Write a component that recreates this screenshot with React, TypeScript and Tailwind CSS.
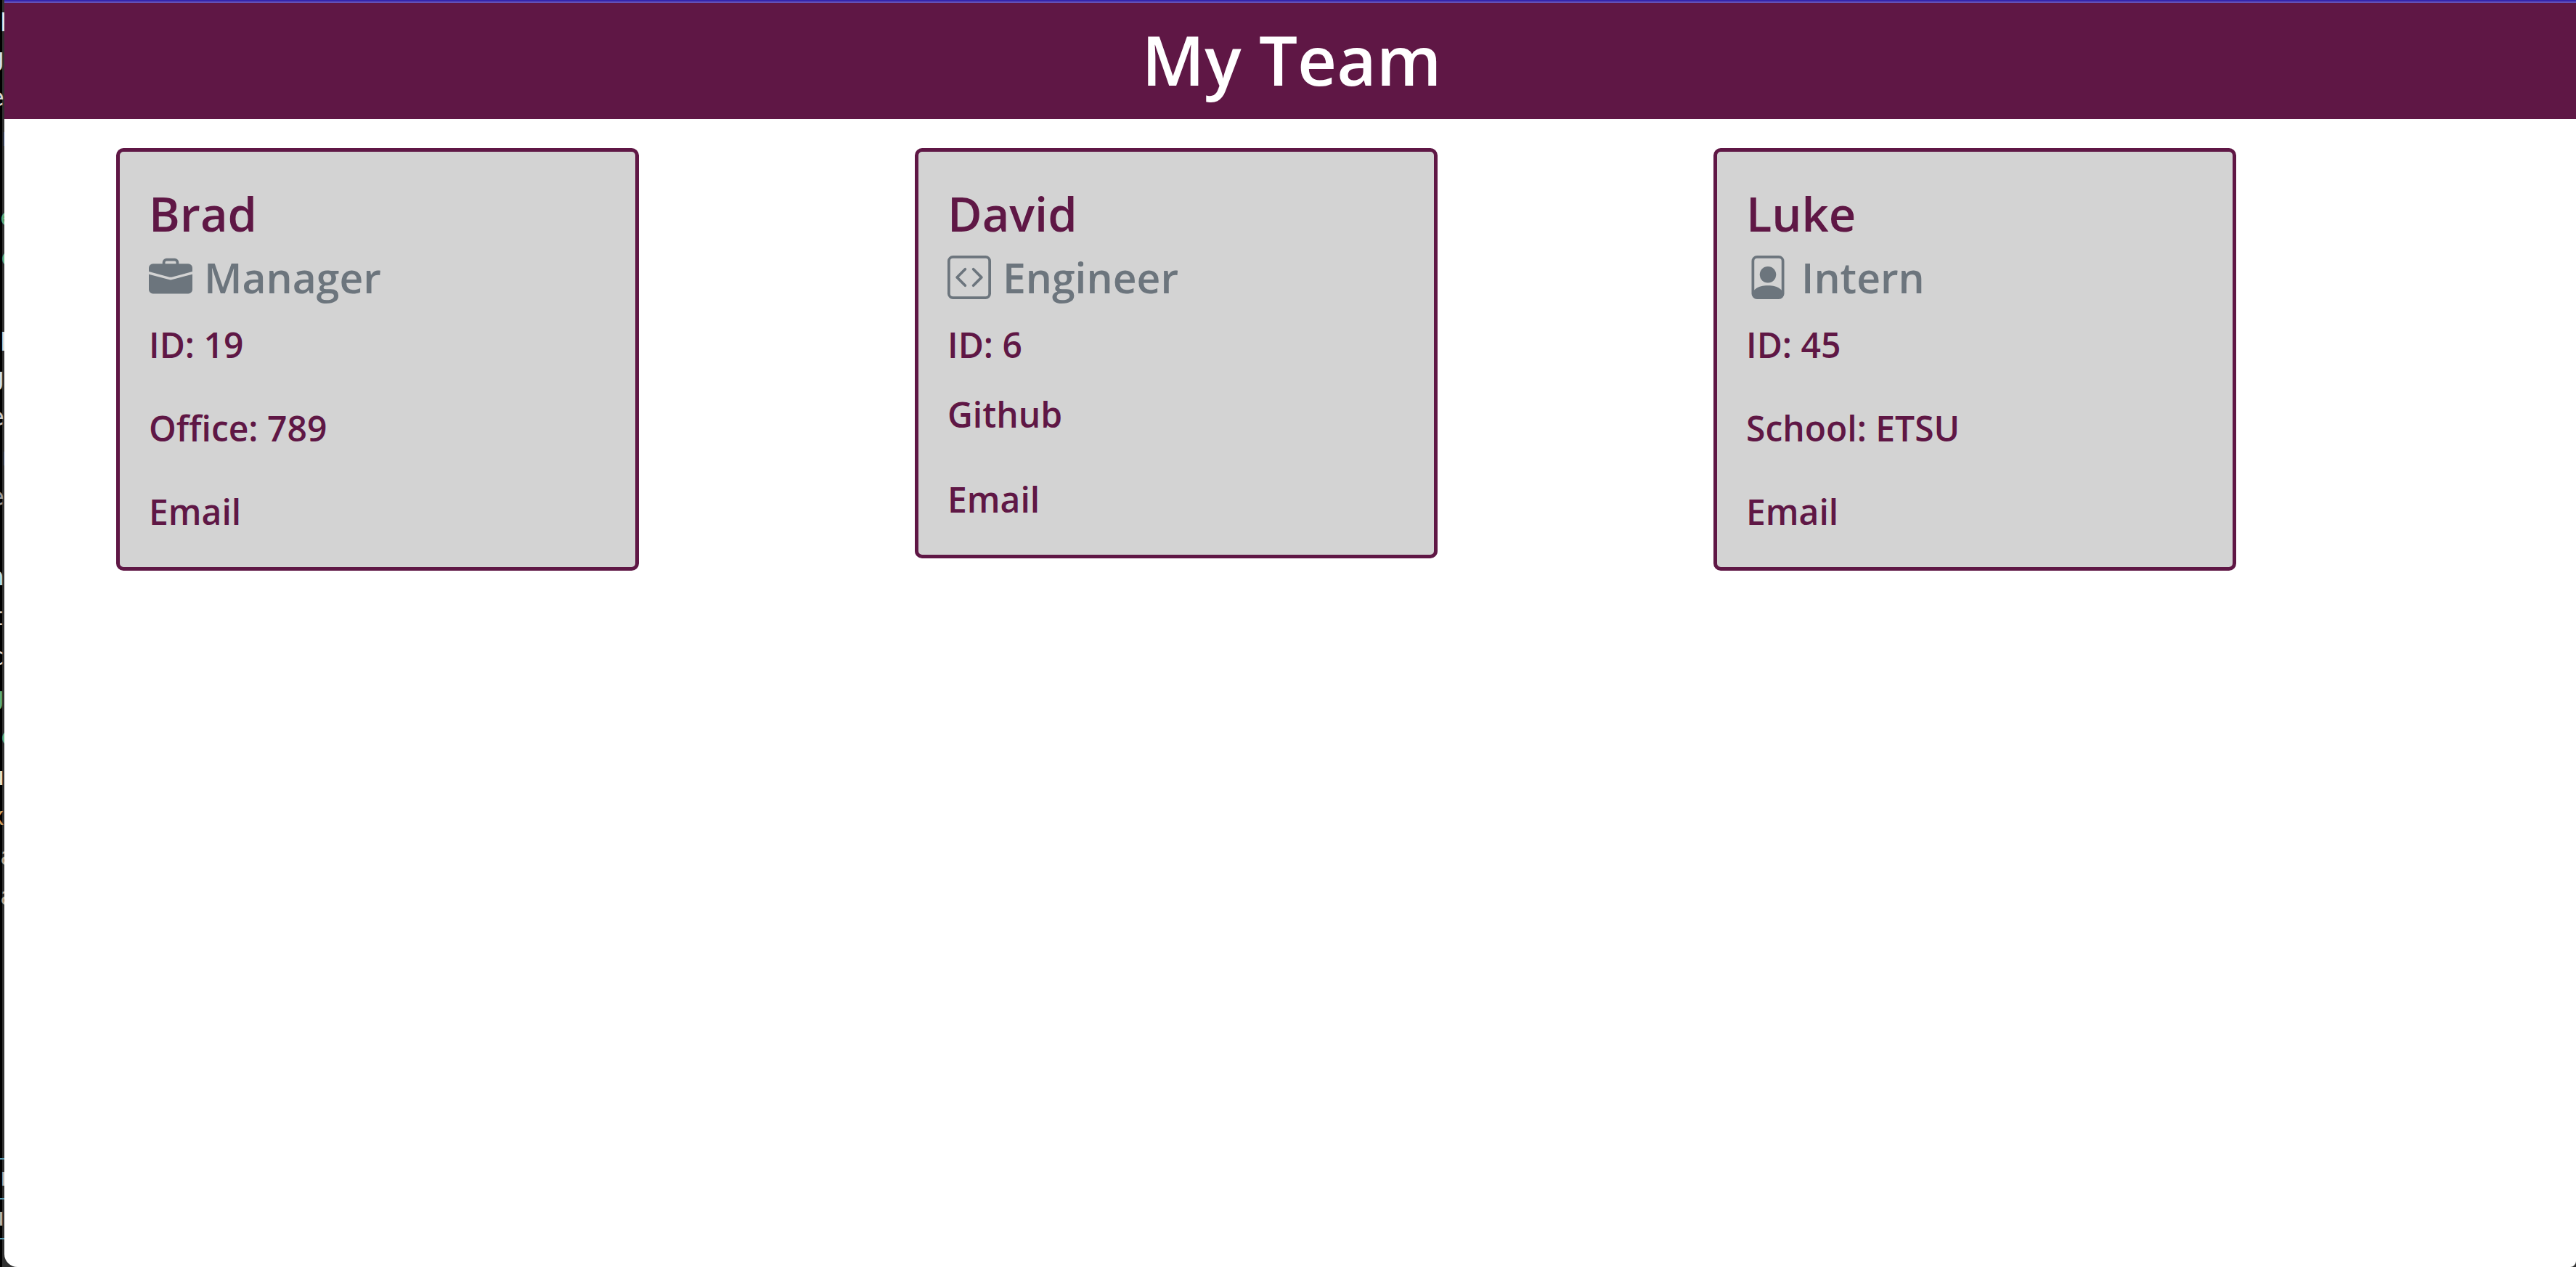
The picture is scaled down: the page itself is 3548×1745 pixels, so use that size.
import type { IconType } from "react-icons";
import { BsBriefcaseFill, BsCodeSquare, BsFilePerson } from "react-icons/bs";

type Member = {
  name: string;
  role: string;
  icon: IconType;
  id: number;
  detail: string;
  detailHref?: string;
};

const members: Member[] = [
  { name: "Brad", role: "Manager", icon: BsBriefcaseFill, id: 19, detail: "Office: 789" },
  { name: "David", role: "Engineer", icon: BsCodeSquare, id: 6, detail: "Github", detailHref: "#github" },
  { name: "Luke", role: "Intern", icon: BsFilePerson, id: 45, detail: "School: ETSU" },
];

// Code lines of the editor window behind the page; only a sliver of each shows.
const left = "justify-start";
const right = "justify-end";
const editorLines: [string, string, string][] = [
  ["p", left, "text-[#e6e6e6]"],
  ["g", right, "text-[#cfe0ee]"],
  ["e", right, "text-[#d4d4d4]"],
  ["r", left, "text-[#d0d0e8]"],
  ["", left, ""],
  ["e", left, "text-[#5fae7c]"],
  ["c", left, "text-[#5fae7c]"],
  ["", left, ""],
  ["p", left, "text-[#dcdcdc]"],
  ["g", right, "text-[#cfe0ee]"],
  ["e", right, "text-[#c8c8c8]"],
  ["r", left, "text-[#c8c8c8]"],
  ["e", right, "text-[#9a9a9a]"],
  ["", left, ""],
  ["n", right, "text-[#b8dcec]"],
  ["t", right, "text-[#dcdcdc]"],
  ["c", right, "text-[#dcdcdc]"],
  ["g", right, "text-[#5fae7c]"],
  ["c", left, "text-[#5fae7c]"],
  ["u", right, "text-[#efe3d0]"],
  ["x", right, "text-[#d0a060]"],
  ["a", left, "text-[#b8a890]"],
  ["a", left, "text-[#b8a890]"],
  [")", right, "text-[#c8a878]"],
  ["", left, ""],
  ["", left, ""],
  ["", left, ""],
  ["", left, ""],
  ["", left, ""],
  ["n", left, "border-t-2 border-[#5a9ab0] text-[#b8b4b0]"],
  ["u", right, "border-t-2 border-[#5a9ab0] text-[#b8b4b0]"],
  ["", left, "border-t-2 border-[#5a9ab0]"],
];

function EditorSliver() {
  return (
    <div
      aria-hidden="true"
      className="w-[6px] shrink-0 overflow-hidden bg-linear-to-r from-black from-50% to-[#303030] to-50% font-['DejaVu_Sans_Mono',monospace] text-[34px] leading-[48px] font-normal"
    >
      {editorLines.map(([glyph, side, color], i) => (
        <div key={i} className={`flex h-[55px] ${side} ${color}`}>
          {glyph}
        </div>
      ))}
    </div>
  );
}

function MemberCard({ name, role, icon: Icon, id, detail, detailHref }: Member) {
  return (
    <article className="ml-[33px] w-[720px] rounded-[10px] border-[5px] border-[#5f1745] bg-[#d3d3d3] px-10 pt-10 pb-[39px] text-[48px] leading-[75px]">
      <h2 className="text-[65px] leading-[90px]">{name}</h2>
      <h3 className="mb-3 flex items-center gap-4 text-[57px] leading-[86px] text-[#6c757d]">
        <Icon className="size-[60px]" aria-hidden="true" />
        {role}
      </h3>
      <p>ID: {id}</p>
      {detailHref ? (
        <p className="mt-[21px] mb-[42px]">
          <a href={detailHref}>{detail}</a>
        </p>
      ) : (
        <p className="my-10">{detail}</p>
      )}
      <p>
        <a href={`mailto:${name.toLowerCase()}@example.com`}>Email</a>
      </p>
    </article>
  );
}

export default function App() {
  return (
    <div className="flex h-screen overflow-hidden bg-[#303030] font-['Open_Sans','Noto_Sans',sans-serif] font-semibold text-[#5f1745]">
      <EditorSliver />
      <div className="min-w-0 grow rounded-br-lg rounded-bl-[18px] bg-white">
        <header className="border-t-2 border-[#3424ac] bg-[#5f1745] text-center text-white">
          <h1 className="border-t-2 border-[#6350b8] pt-[18px] pb-[22px] pl-1 text-[94px] leading-[120px]">My Team</h1>
        </header>
        <main className="mx-auto grid max-w-[3300px] grid-cols-3 items-start pt-10">
          {members.map((member) => (
            <MemberCard key={member.name} {...member} />
          ))}
        </main>
      </div>
    </div>
  );
}
